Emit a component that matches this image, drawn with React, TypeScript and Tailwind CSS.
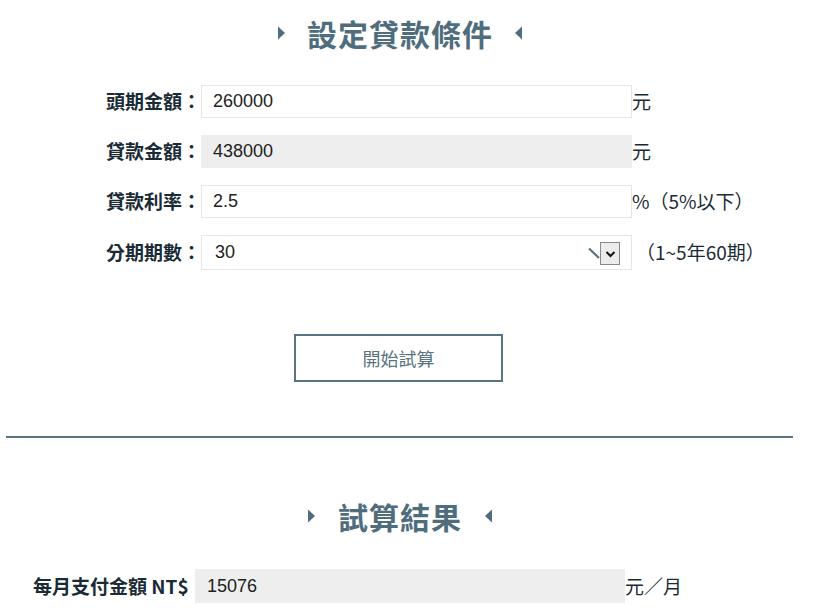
import React from "react";

const CJK = "font-['Noto_Sans_CJK_TC','Noto_Sans',sans-serif]";
const LAT = "font-['Liberation_Sans','Noto_Sans_CJK_TC',sans-serif]";

function Tri({ dir }: { dir: "right" | "left" }) {
  return (
    <svg width="9" height="14" viewBox="0 0 9 14" className="shrink-0">
      {dir === "right" ? (
        <polygon points="1,0.5 8,7 1,13.5" fill="#4f6d7d" />
      ) : (
        <polygon points="8,0.5 1,7 8,13.5" fill="#4f6d7d" />
      )}
    </svg>
  );
}

function Title({ text, gap }: { text: string; gap: string }) {
  return (
    <div className={`h-[66px] flex items-center justify-center ${gap}`}>
      <Tri dir="right" />
      <span className={`${CJK} text-[30px] leading-[30px] font-bold text-[#4f6d7d] tracking-[1px]`}>{text}</span>
      <Tri dir="left" />
    </div>
  );
}

function Row({
  label,
  value,
  gray,
  unit,
}: {
  label: string;
  value: string;
  gray?: boolean;
  unit: string;
}) {
  return (
    <div className="flex items-center">
      <label className={`${CJK} w-[201px] text-right text-[19px] font-bold text-[#1b2b36] whitespace-nowrap`}>{label}</label>
      <input
        readOnly
        value={value}
        className={`${LAT} w-[431px] h-[33px] border border-[#e6e6e6] px-[11px] text-[18px] text-[#222] outline-none ${gray ? "bg-[#eeeeee] border-[#eeeeee]" : "bg-white"}`}
      />
      <span className={`${CJK} text-[19px] text-[#1b2b36] whitespace-nowrap`}>{unit}</span>
    </div>
  );
}

export default function App() {
  return (
    <div className="w-[837px] h-[609px] overflow-hidden bg-white">
      <div className="w-[800px]">
        <Title text="設定貸款條件" gap="gap-[21px]" />

        <div className="mt-[19px] flex flex-col gap-[17px]">
          <Row label="頭期金額：" value="260000" unit="元" />
          <Row label="貸款金額：" value="438000" gray unit="元" />
          <Row label="貸款利率：" value="2.5" unit="%（5%以下）" />
          <div className="flex items-center">
            <label className={`${CJK} w-[201px] text-right text-[19px] font-bold text-[#1b2b36] whitespace-nowrap`}>分期期數：</label>
            <div className="relative w-[431px] h-[35px] border border-[#e6e6e6] bg-white flex items-center pl-[13px]">
              <span className={`${LAT} text-[18px] text-[#222]`}>30</span>
              <svg width="14" height="14" viewBox="0 0 14 14" className="absolute left-[385px] top-[10px]">
                <line x1="2" y1="2.5" x2="12" y2="12" stroke="#5a7380" strokeWidth="2.2" />
              </svg>
              <div className="absolute left-[398px] top-[6px] w-[20px] h-[23px] border border-[#8a8a8a] bg-[#ececec] flex items-center justify-center">
                <svg width="11" height="8" viewBox="0 0 11 8">
                  <polyline points="1.5,2 5.5,6 9.5,2" fill="none" stroke="#111" strokeWidth="2" />
                </svg>
              </div>
            </div>
            <span className={`${CJK} ml-[4px] text-[19px] text-[#1b2b36] whitespace-nowrap`}>（1~5年60期）</span>
          </div>
        </div>

        <button
          className={`${CJK} block mt-[64px] ml-[294px] w-[209px] h-[48px] border-2 border-[#5a7380] bg-white text-[18px] text-[#5a7380]`}
        >
          開始試算
        </button>

        <div className="mt-[54px] ml-[6px] w-[787px] h-[2px] bg-[#5a7380]" />

        <div className="mt-[45px]">
          <Title text="試算結果" gap="gap-[22px]" />
        </div>

        <div className="mt-[20px] flex items-center">
          <label className={`${CJK} w-[195px] pl-[33px] text-[19px] font-bold text-[#1b2b36] whitespace-nowrap`}>每月支付金額 NT$</label>
          <input
            readOnly
            value="15076"
            className={`${LAT} w-[430px] h-[34px] bg-[#eeeeee] px-[12px] text-[18px] text-[#222] outline-none`}
          />
          <span className={`${CJK} text-[19px] text-[#1b2b36] whitespace-nowrap`}>元／月</span>
        </div>
      </div>
    </div>
  );
}
